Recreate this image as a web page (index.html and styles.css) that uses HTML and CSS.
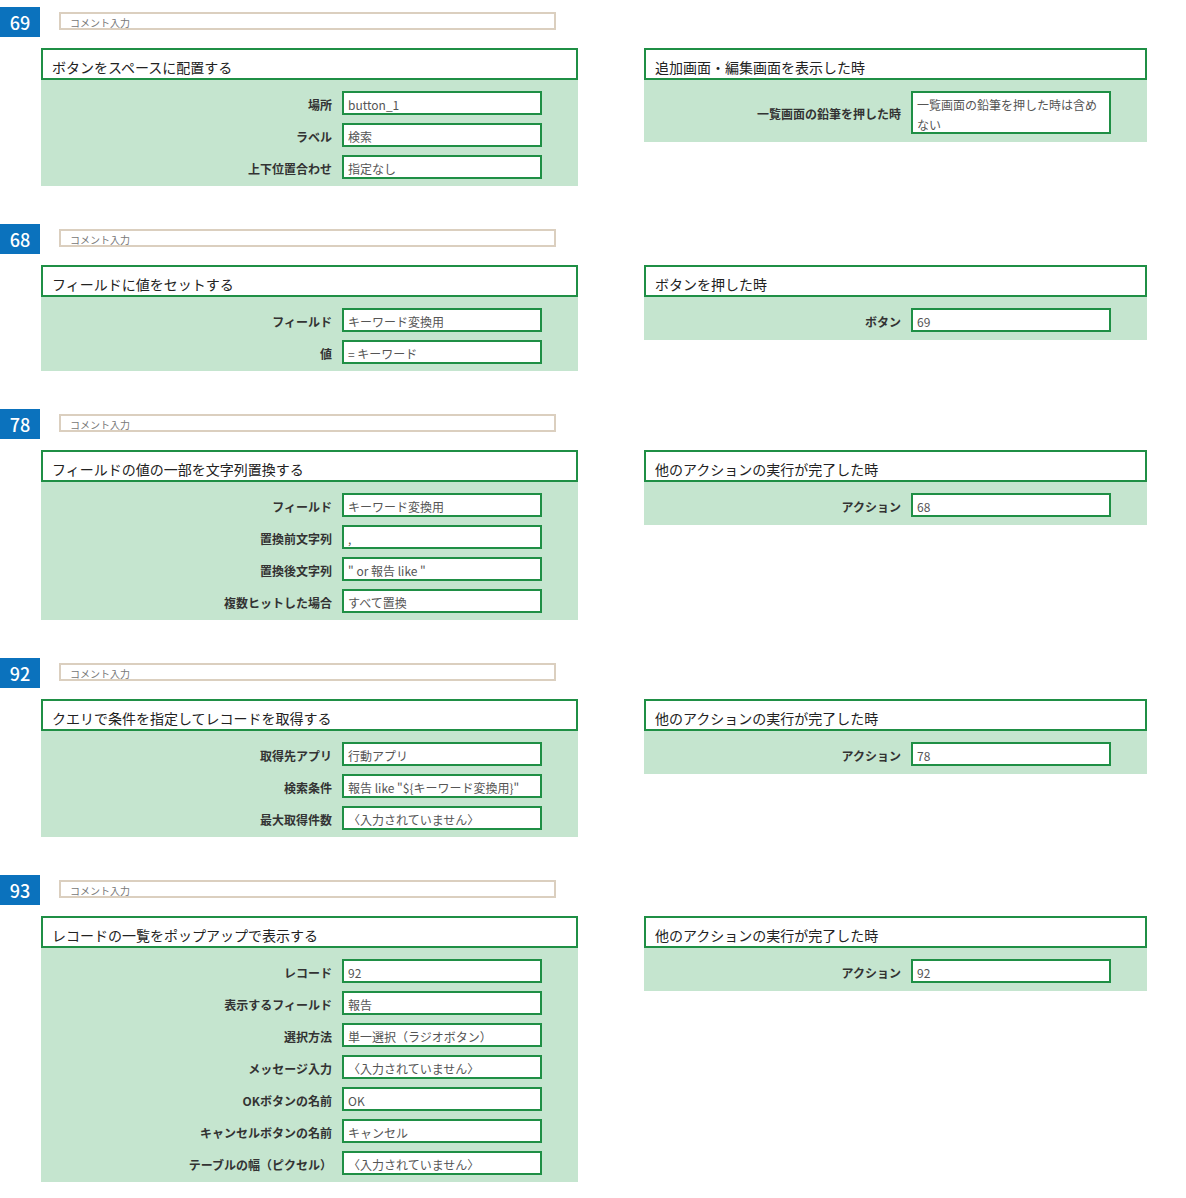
FILE: index.html
```html
<!DOCTYPE html>
<html lang="ja">
<head>
    <meta charset="UTF-8">
    <title>アクション一覧</title>
    <link rel="stylesheet" href="styles.css">
</head>
<body>
    <div class="flow">

        <section class="block">
            <div class="block-head">
                <div class="num">69</div>
                <div class="comment">コメント入力</div>
            </div>
            <div class="cols">
                <div class="panel action">
                    <div class="panel-title">ボタンをスペースに配置する</div>
                    <div class="panel-body">
                        <div class="row"><span class="label">場所</span><span class="value">button_1</span></div>
                        <div class="row"><span class="label">ラベル</span><span class="value">検索</span></div>
                        <div class="row"><span class="label">上下位置合わせ</span><span class="value">指定なし</span></div>
                    </div>
                </div>
                <div class="panel trigger">
                    <div class="panel-title">追加画面・編集画面を表示した時</div>
                    <div class="panel-body">
                        <div class="row"><span class="label">一覧画面の鉛筆を押した時</span><span class="value multi">一覧画面の鉛筆を押した時は含めない</span></div>
                    </div>
                </div>
            </div>
        </section>

        <section class="block">
            <div class="block-head">
                <div class="num">68</div>
                <div class="comment">コメント入力</div>
            </div>
            <div class="cols">
                <div class="panel action">
                    <div class="panel-title">フィールドに値をセットする</div>
                    <div class="panel-body">
                        <div class="row"><span class="label">フィールド</span><span class="value">キーワード変換用</span></div>
                        <div class="row"><span class="label">値</span><span class="value">= キーワード</span></div>
                    </div>
                </div>
                <div class="panel trigger">
                    <div class="panel-title">ボタンを押した時</div>
                    <div class="panel-body">
                        <div class="row"><span class="label">ボタン</span><span class="value">69</span></div>
                    </div>
                </div>
            </div>
        </section>

        <section class="block">
            <div class="block-head">
                <div class="num">78</div>
                <div class="comment">コメント入力</div>
            </div>
            <div class="cols">
                <div class="panel action">
                    <div class="panel-title">フィールドの値の一部を文字列置換する</div>
                    <div class="panel-body">
                        <div class="row"><span class="label">フィールド</span><span class="value">キーワード変換用</span></div>
                        <div class="row"><span class="label">置換前文字列</span><span class="value">,</span></div>
                        <div class="row"><span class="label">置換後文字列</span><span class="value">" or 報告 like "</span></div>
                        <div class="row"><span class="label">複数ヒットした場合</span><span class="value">すべて置換</span></div>
                    </div>
                </div>
                <div class="panel trigger">
                    <div class="panel-title">他のアクションの実行が完了した時</div>
                    <div class="panel-body">
                        <div class="row"><span class="label">アクション</span><span class="value">68</span></div>
                    </div>
                </div>
            </div>
        </section>

        <section class="block">
            <div class="block-head">
                <div class="num">92</div>
                <div class="comment">コメント入力</div>
            </div>
            <div class="cols">
                <div class="panel action">
                    <div class="panel-title">クエリで条件を指定してレコードを取得する</div>
                    <div class="panel-body">
                        <div class="row"><span class="label">取得先アプリ</span><span class="value">行動アプリ</span></div>
                        <div class="row"><span class="label">検索条件</span><span class="value">報告 like "${キーワード変換用}"</span></div>
                        <div class="row"><span class="label">最大取得件数</span><span class="value">〈入力されていません〉</span></div>
                    </div>
                </div>
                <div class="panel trigger">
                    <div class="panel-title">他のアクションの実行が完了した時</div>
                    <div class="panel-body">
                        <div class="row"><span class="label">アクション</span><span class="value">78</span></div>
                    </div>
                </div>
            </div>
        </section>

        <section class="block">
            <div class="block-head">
                <div class="num">93</div>
                <div class="comment">コメント入力</div>
            </div>
            <div class="cols">
                <div class="panel action">
                    <div class="panel-title">レコードの一覧をポップアップで表示する</div>
                    <div class="panel-body">
                        <div class="row"><span class="label">レコード</span><span class="value">92</span></div>
                        <div class="row"><span class="label">表示するフィールド</span><span class="value">報告</span></div>
                        <div class="row"><span class="label">選択方法</span><span class="value">単一選択（ラジオボタン）</span></div>
                        <div class="row"><span class="label">メッセージ入力</span><span class="value">〈入力されていません〉</span></div>
                        <div class="row"><span class="label">OKボタンの名前</span><span class="value">OK</span></div>
                        <div class="row"><span class="label">キャンセルボタンの名前</span><span class="value">キャンセル</span></div>
                        <div class="row"><span class="label">テーブルの幅（ピクセル）</span><span class="value">〈入力されていません〉</span></div>
                    </div>
                </div>
                <div class="panel trigger">
                    <div class="panel-title">他のアクションの実行が完了した時</div>
                    <div class="panel-body">
                        <div class="row"><span class="label">アクション</span><span class="value">92</span></div>
                    </div>
                </div>
            </div>
        </section>

    </div>
</body>
</html>
```

FILE: styles.css
```css
:root {
    --num-blue: #0b72bd;
    --comment-border: #dbcfbf;
    --panel-border: #1f8f45;
    --panel-fill: #c5e5cf;
    --label-color: #333333;
    --value-color: #555555;
}

body {
    margin: 0;
    padding: 0;
    background: #ffffff;
    font-family: "Noto Sans CJK JP", "Noto Sans", sans-serif;
    color: var(--label-color);
}

.flow {
    display: flex;
    flex-direction: column;
    gap: 38px;
    padding-top: 7px;
}

.block-head {
    display: flex;
    align-items: flex-start;
    gap: 19px;
    height: 30px;
}

.num {
    width: 40px;
    height: 30px;
    background: var(--num-blue);
    color: #ffffff;
    font-family: "Noto Sans CJK JP", "Noto Sans", sans-serif;
    font-weight: 500;
    font-size: 18px;
    line-height: 30px;
    text-align: center;
}

.comment {
    box-sizing: border-box;
    width: 497px;
    height: 18px;
    margin-top: 5px;
    border: 2px solid var(--comment-border);
    padding-left: 9px;
    font-size: 10px;
    line-height: 18px;
    color: #777777;
}

.cols {
    display: flex;
    align-items: flex-start;
    gap: 66px;
    padding-left: 41px;
    margin-top: 11px;
}

.panel.action {
    width: 537px;
}

.panel.trigger {
    width: 503px;
}

.panel-title {
    box-sizing: border-box;
    height: 32px;
    border: 2px solid var(--panel-border);
    background: #ffffff;
    padding: 7px 0 0 9px;
    font-size: 14px;
    line-height: 20px;
    color: #222222;
    overflow: hidden;
}

.panel-body {
    background: var(--panel-fill);
    padding: 11px 0 7px;
    display: flex;
    flex-direction: column;
    gap: 8px;
}

.row {
    display: flex;
    align-items: center;
    gap: 10px;
}

.label {
    padding-top: 3px;
    font-size: 12px;
    line-height: 18px;
    font-weight: bold;
    text-align: right;
    color: var(--label-color);
}

.action .label {
    width: 291px;
}

.trigger .label {
    width: 257px;
}

.value {
    box-sizing: border-box;
    width: 200px;
    height: 24px;
    border: 2px solid var(--panel-border);
    background: #ffffff;
    padding: 3px 6px 0 4px;
    font-size: 12px;
    line-height: 18px;
    color: var(--value-color);
    white-space: nowrap;
    overflow: hidden;
}

.value.multi {
    height: 43px;
    padding-top: 2px;
    line-height: 20px;
    white-space: normal;
}

.trigger .panel-body {
    padding-bottom: 8px;
}
```
